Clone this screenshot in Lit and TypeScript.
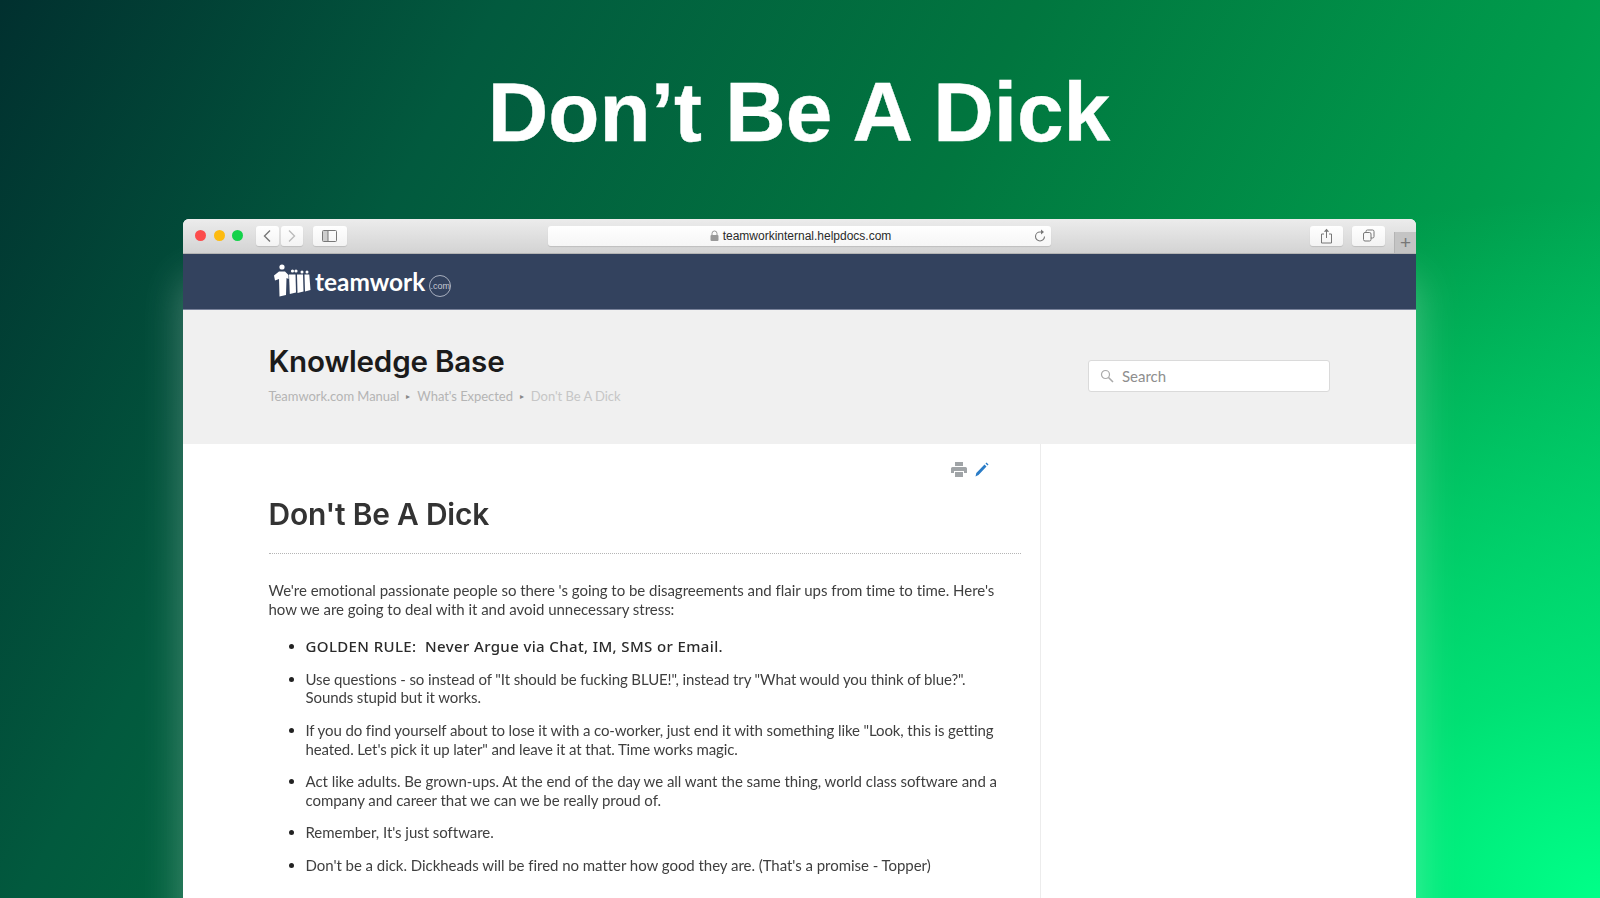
import { LitElement, html, css } from "lit";
import { customElement } from "lit/decorators.js";

@customElement("app-root")
export class AppRoot extends LitElement {
  static styles = css`
    :host { display: block; width: 1600px; height: 898px; overflow: hidden; position: relative;
      font-family: Lato, "Noto Sans", sans-serif; }
    .page { width: 1600px; height: 898px; box-sizing: border-box; overflow: hidden; display: flex; flex-direction: column; align-items: center;
      background:
        radial-gradient(ellipse 900px 700px at 1600px 898px, #00ff88 0%, rgba(0,240,125,.75) 30%, rgba(0,200,100,0) 100%),
        linear-gradient(118deg, #01302f 0%, #025a3e 24%, #01763f 50%, #009c4c 76%, #00c262 100%); }
    .title { margin: 0 0 0 -2px; height: 219px; box-sizing: border-box; padding-top: 64px; font: 700 83.800px/96px "Liberation Sans", Arial, sans-serif; color: #fff; text-align: center; flex: none; -webkit-text-stroke: .4px #fff; }
    .win { width: 1233px; flex: none; height: 700px; background: #fff; border-radius: 6px 6px 0 0; box-shadow: 0 60px 42px rgba(255,255,255,.28); overflow: hidden; margin-left: -1px; }
    .inner { filter: blur(.35px); }

    .chrome { height: 35px; box-sizing: border-box; border-bottom: 1px solid #b4b4b4; background: linear-gradient(#ececec, #d3d3d3); display: flex; align-items: center; padding: 0 0 1px 12px; position: relative; }
    .dot { width: 11px; height: 11px; border-radius: 50%; margin-right: 7.5px; flex: none; }
    .btn { height: 20px; background: linear-gradient(#fff,#f3f3f3); border-radius: 3px; box-shadow: 0 1px 1px rgba(0,0,0,.12); display: flex; align-items: center; justify-content: center; flex: none; }
    .back { width: 23px; margin-left: 5px; }
    .fwd { width: 22px; margin-left: 2px; }
    .side { width: 34px; margin-left: 10px; }
    .url { width: 503px; height: 20px; margin-left: 201px; background: linear-gradient(#fff,#f6f6f6); border-radius: 3px; box-shadow: 0 1px 1px rgba(0,0,0,.12); display: flex; align-items: center; justify-content: center; position: relative; flex: none; font: 12px "Liberation Sans", Arial, sans-serif; color: #2a2a2a; gap: 4px; padding-left: 3px; box-sizing: border-box; }
    .url svg.reload { position: absolute; right: 4px; top: 3px; }
    .share { width: 33px; margin-left: 259px; }
    .tabs { width: 33px; margin-left: 9px; }
    .plus { position: absolute; right: 0; top: 13px; width: 22px; height: 21px; background: #c4c4c4; color: #777; font: 300 19px/22px "Liberation Sans", sans-serif; text-align: center; border-left: 1px solid #b4b4b4; box-sizing: border-box; }

    .nav { height: 56px; box-sizing: border-box; background: #33425e; border-bottom: 1px solid #79829a; display: flex; align-items: center; padding: 0 0 2px 91px; }
    .logo-text { font: 700 24.400px/28px Lato, sans-serif; color: #fff; margin-left: 4px; position: relative; top: 1px; }
    .com { width: 22px; height: 22px; box-sizing: border-box; border: 1px solid #a9b0bf; border-radius: 50%; color: #c4c9d4; font: 9px/20px "Liberation Sans", sans-serif; text-align: center; margin-left: 4px; position: relative; top: 5px; }

    .kb { height: 134px; background: #f0f0f0; box-sizing: border-box; padding: 33px 86px 0 85.500px; display: flex; justify-content: space-between; }
    .kb h1 { margin: 0; font: 600 29.600px/36px Inter, Lato, sans-serif; letter-spacing: -.2px; color: #1b1b1b; }
    .crumbs { margin-top: 9px; font: 13px/16px Lato, sans-serif; letter-spacing: -.05px; color: #b4b4b4; display: flex; align-items: center; }
    .crumbs i { font-style: normal; color: #888; font-size: 8px; margin: 0 7px; }
    .crumbs .last { color: #c6c6c6; }
    .search { width: 242px; height: 32px; background: #fff; border: 1px solid #dadada; border-radius: 3px; box-sizing: border-box; display: flex; align-items: center; padding-left: 11px; gap: 8px; font: 15px Lato, sans-serif; color: #8e8e8e; margin-top: 17px; }

    .body { display: flex; height: 475px; }
    .main { width: 858px; box-sizing: border-box; border-right: 1px solid #ececec; padding: 0 19px 0 85.500px; position: relative; }
    .tools { display: flex; justify-content: flex-end; gap: 8px; padding: 18px 32px 0 0; height: 47px; box-sizing: border-box; }
    .main h2 { margin: 0; font: 600 29.900px/46px Inter, Lato, sans-serif; letter-spacing: -.2px; color: #333; border-bottom: 1px dotted #b5b5b5; padding-bottom: 16px; height: 46px; }
    p { margin: 27px 0 0; font: 15px/18.600px Lato, sans-serif; letter-spacing: -.03px; color: #3f3f3f; }
    ul { margin: 19px 0 0; padding: 0 0 0 37px; font: 15px/18.600px Lato, sans-serif; color: #3f3f3f; }
    li { margin-bottom: 14px; }
    li::marker { color: #222; }
    .tight { letter-spacing: -.11px; }
    .snug { letter-spacing: -.04px; }
    b { font-weight: 500; color: #2a2a2a; letter-spacing: .37px; font-family: "Noto Sans", Lato, sans-serif; font-size: 15px; }
  `;

  render() {
    return html`
      <div class="page">
        <h1 class="title">Don’t Be A Dick</h1>
        <div class="win">
          <div class="inner">
          <div class="chrome">
            <span class="dot" style="background:#fc4c4c"></span>
            <span class="dot" style="background:#fdbb10"></span>
            <span class="dot" style="background:#14d24a"></span>
            <span class="btn back"><svg width="10" height="14" viewBox="0 0 10 14"><path d="M8 1.500 2.500 7 8 12.500" fill="none" stroke="#777" stroke-width="1.400"/></svg></span>
            <span class="btn fwd"><svg width="10" height="14" viewBox="0 0 10 14"><path d="M2 1.500 7.500 7 2 12.500" fill="none" stroke="#bbb" stroke-width="1.400"/></svg></span>
            <span class="btn side"><svg width="15" height="12" viewBox="0 0 15 12"><rect x=".5" y=".5" width="14" height="11" rx="1" fill="none" stroke="#777"/><rect x="1" y="1" width="5" height="10" fill="#ccc"/><path d="M6 1v10" stroke="#777"/></svg></span>
            <span class="url">
              <svg width="9" height="11" viewBox="0 0 9 11"><path d="M2 5V3.500a2.500 2.500 0 0 1 5 0V5" fill="none" stroke="#999"/><rect x=".5" y="5" width="8" height="6" rx="1" fill="#999"/></svg>
              <span>teamworkinternal.helpdocs.com</span>
              <svg class="reload" width="13" height="14" viewBox="0 0 13 14"><path d="M10.500 7.500a4.500 4.500 0 1 1-4.500-4.500h2" fill="none" stroke="#777" stroke-width="1.100"/><path d="M7 .5 10 3 7 5.500z" fill="#777"/></svg>
            </span>
            <span class="btn share"><svg width="13" height="16" viewBox="0 0 13 16"><path d="M4 6H1.500v9h10V6H9" fill="none" stroke="#777"/><path d="M6.500 10V2" fill="none" stroke="#777"/><path d="M3.800 3.800 6.500.8 9.200 3.800z" fill="#777"/></svg></span>
            <span class="btn tabs"><svg width="13" height="13" viewBox="0 0 13 13"><rect x="4" y="1" width="8" height="8" rx="1.500" fill="none" stroke="#777"/><rect x="1.500" y="3.500" width="7.500" height="8.500" rx="1.500" fill="#f8f8f8" stroke="#777"/></svg></span>
            <span class="plus">+</span>
          </div>
          <div class="nav">
            <svg width="37" height="33" viewBox="0 0 37 33"><g fill="#fff">
              <circle cx="8" cy="3" r="2.600"/><path d="M0 11.500 5 7.500h6l3.500 3.500v4l-2-1-.5 17-6.500 1.500L5 15l-4 1.500z"/>
              <circle cx="18.500" cy="7" r="1.600"/><circle cx="22" cy="7" r="1.600"/><path d="M15 10.500h6.500l.5 18-6.200 1.500z"/>
              <circle cx="28" cy="8" r="1.500"/><circle cx="33" cy="8" r="1.500"/><path d="M23 10.500h6l.5 17-6 1.500zM30.500 10.500h4.800l1.200 15.500-5.500 1.500z"/>
            </g></svg>
            <span class="logo-text">teamwork</span>
            <span class="com">.com</span>
          </div>
          <div class="kb">
            <div>
              <h1>Knowledge Base</h1>
              <div class="crumbs"><span>Teamwork.com Manual</span><i>▸</i><span>What's Expected</span><i>▸</i><span class="last">Don't Be A Dick</span></div>
            </div>
            <div class="search">
              <svg width="14" height="14" viewBox="0 0 14 14"><circle cx="5.500" cy="5.500" r="4" fill="none" stroke="#aaa" stroke-width="1.200"/><path d="M8.500 8.500 13 13" stroke="#aaa" stroke-width="1.600"/></svg>
              <span>Search</span>
            </div>
          </div>
          <div class="body">
            <div class="main">
              <div class="tools">
                <svg width="16" height="15" viewBox="0 0 16 15"><path d="M4 0h8v4H4zM1.500 5h13A1.500 1.500 0 0 1 16 6.500V11h-3V9H3v2H0V6.500A1.500 1.500 0 0 1 1.500 5zM4 10h8v5H4z" fill="#a0a4a7"/></svg>
                <svg width="14" height="15" viewBox="0 0 14 15"><path d="M.5 14.500 1.300 11 9.500 2.500 11.500 4.500 3.500 13zM10.500 1.500l1-1 2 2-1 1z" fill="#2a7cc7"/></svg>
              </div>
              <h2>Don't Be A Dick</h2>
              <p>We're emotional passionate people so there 's going to be disagreements and flair ups from time to time. Here's how we are going to deal with it and avoid unnecessary stress:</p>
              <ul>
                <li><b>GOLDEN RULE:&nbsp; Never Argue via Chat, IM, SMS or Email.</b></li>
                <li class="tight">Use questions - so instead of "It should be fucking BLUE!", instead try "What would you think of blue?".<br>Sounds stupid but it works.</li>
                <li class="tight">If you do find yourself about to lose it with a co-worker, just end it with something like "Look, this is getting heated. Let's pick it up later" and leave it at that. Time works magic.</li>
                <li class="snug">Act like adults. Be grown-ups. At the end of the day we all want the same thing, world class software and a company and career that we can we be really proud of.</li>
                <li class="snug">Remember, It's just software.</li>
                <li class="snug">Don't be a dick. Dickheads will be fired no matter how good they are. (That's a promise - Topper)</li>
              </ul>
            </div>
          </div>
          </div>
        </div>
      </div>
    `;
  }
}
